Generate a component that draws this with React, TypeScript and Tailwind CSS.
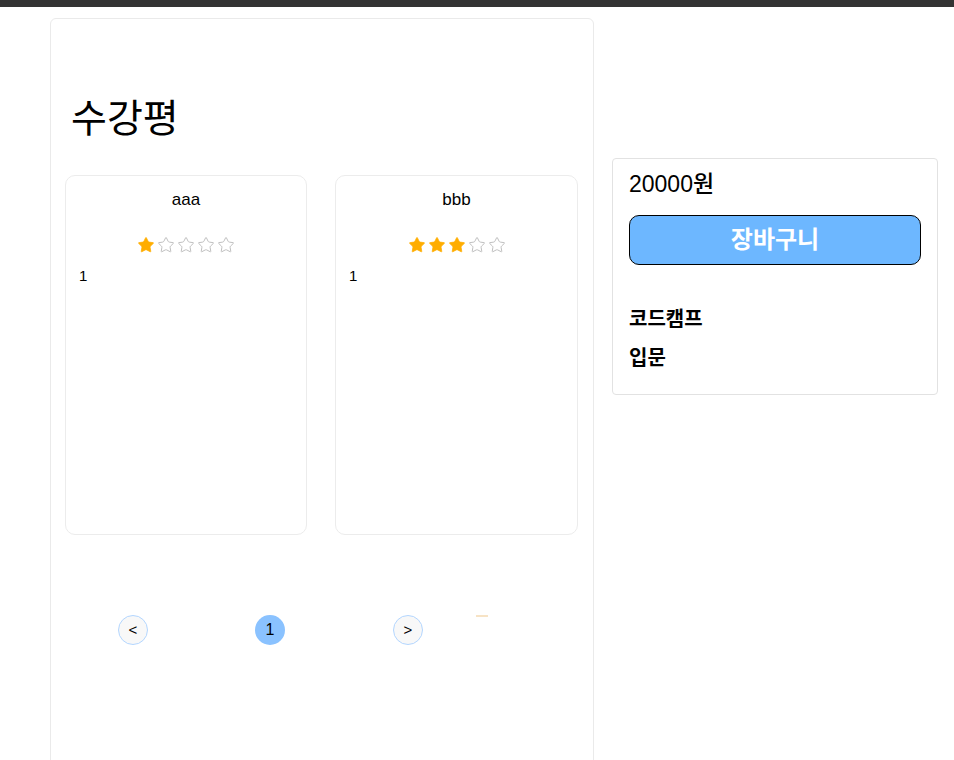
import { Star } from 'lucide-react';

const reviews = [
    { name: 'aaa', rating: 1, body: '1' },
    { name: 'bbb', rating: 3, body: '1' },
];

function Stars({ rating }: { rating: number }) {
    return (
        <div className="flex justify-center gap-[2px]">
            {[1, 2, 3, 4, 5].map((n) =>
                n <= rating ? (
                    <Star key={n} size={18} className="text-[#ffad00]" fill="#ffad00" strokeWidth={1} />
                ) : (
                    <Star key={n} size={18} className="text-[#bdbdbd]" fill="none" strokeWidth={1.3} />
                )
            )}
        </div>
    );
}

export default function App() {
    return (
        <div className="min-h-[760px] bg-white font-['Liberation_Sans','Noto_Sans_CJK_KR',sans-serif] text-black">
            <div className="h-[7px] bg-[#333333]" />
            <div className="flex items-start gap-[18px] pl-[50px] pt-[11px]">
                {/* 수강평 */}
                <div className="w-[544px] h-[760px] rounded-[6px] border border-[#eaeaea] px-[14px]">
                    <h1 className="pl-[6px] pt-[75px] text-[39px] leading-[50px] font-normal">수강평</h1>
                    <div className="mt-[31px] grid grid-cols-[242px_243px] gap-[28px]">
                        {reviews.map((r) => (
                            <div key={r.name} className="h-[360px] rounded-[10px] border border-[#ececec] px-[13px] pt-[12px]">
                                <div className="text-center text-[17px] leading-[24px]">{r.name}</div>
                                <div className="mt-[24px]">
                                    <Stars rating={r.rating} />
                                </div>
                                <div className="mt-[12px] text-[15px] leading-[20px]">{r.body}</div>
                            </div>
                        ))}
                    </div>
                    <div className="relative mt-[80px] flex items-center pl-[53px]">
                        <button className="flex h-[30px] w-[30px] items-center justify-center rounded-full border border-[#b3d6ff] bg-[#f8f8f8] text-[15px]">&lt;</button>
                        <button className="ml-[107px] flex h-[30px] w-[30px] items-center justify-center rounded-full bg-[#8ac2ff] text-[16px]">1</button>
                        <button className="ml-[108px] flex h-[30px] w-[30px] items-center justify-center rounded-full border border-[#b3d6ff] bg-[#f8f8f8] text-[15px]">&gt;</button>
                        <div className="ml-[53px] -mt-[28px] h-[2px] w-[12px] bg-[#f7e3c5]" />
                    </div>
                </div>

                {/* 구매 */}
                <div className="mt-[140px] w-[326px] rounded-[4px] border border-[#e2e2e2] px-[16px] pt-[11px] pb-[23px]">
                    <div className="text-[23px] leading-[28px] font-medium">20000원</div>
                    <button className="mt-[17px] h-[50px] w-full rounded-[10px] border border-black bg-[#6db7ff] text-[24px] font-bold text-white">
                        장바구니
                    </button>
                    <div className="mt-[41px] text-[20px] leading-[26px] font-bold">코드캠프</div>
                    <div className="mt-[13px] text-[20px] leading-[26px] font-bold">입문</div>
                </div>
            </div>
        </div>
    );
}
